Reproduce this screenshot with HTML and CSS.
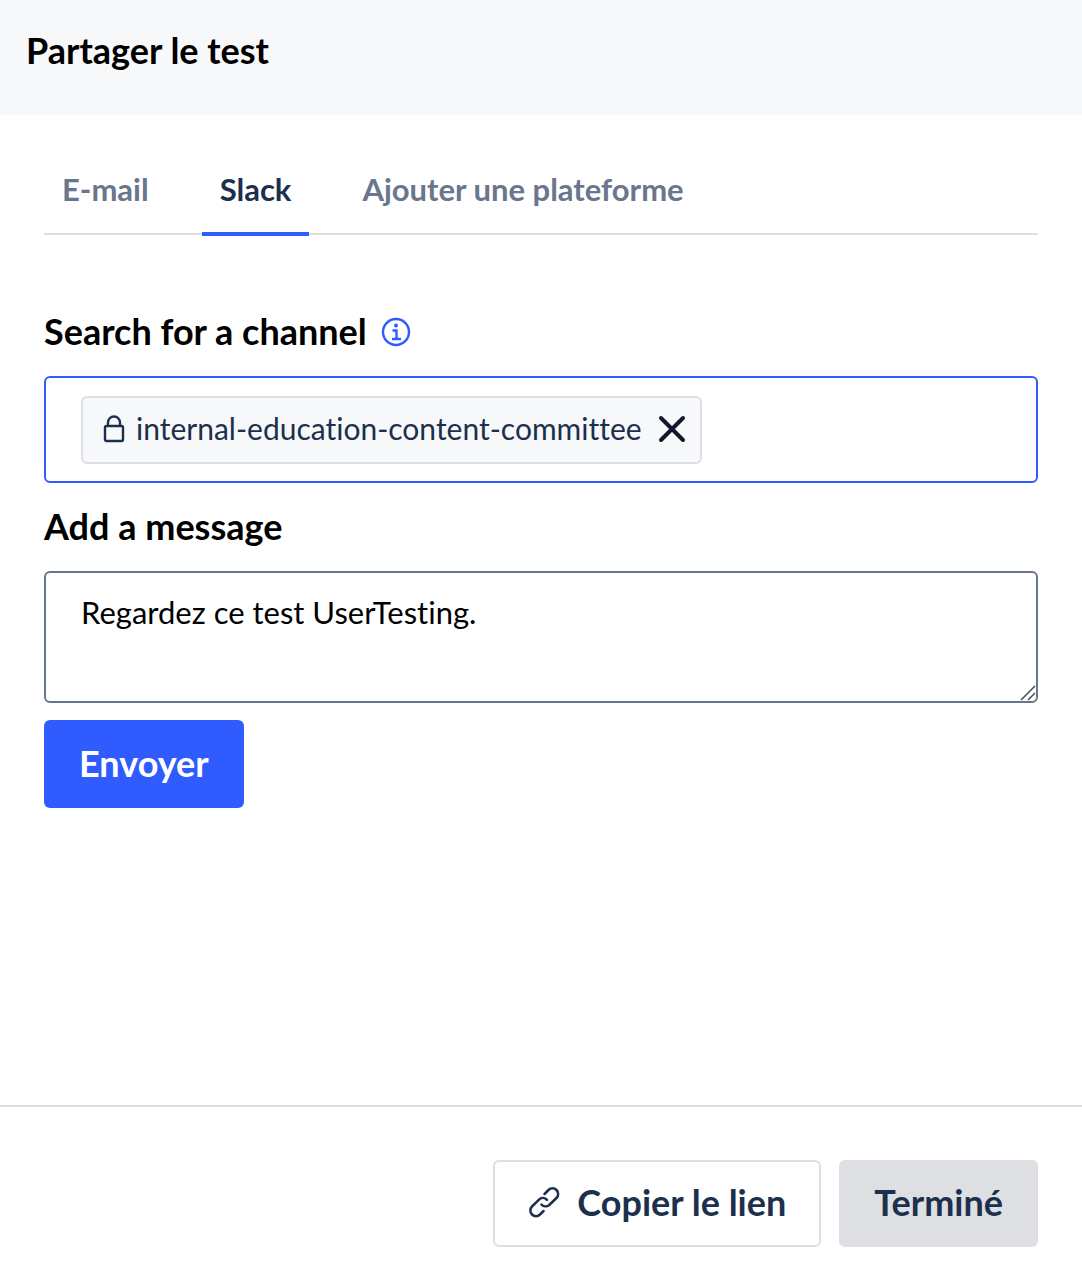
FILE: index.html
```html
<!DOCTYPE html>
<html lang="fr">
<head>
    <meta charset="UTF-8">
    <meta name="viewport" content="width=device-width, initial-scale=1.0">
    <title>Partager le test</title>
    <link rel="stylesheet" href="styles.css">
</head>
<body>

<header class="modal-header">
    <h1 class="modal-title">Partager le test</h1>
</header>

<main class="modal-body">
    <div class="tabs" role="tablist">
        <button type="button" class="tab" role="tab" aria-selected="false">E-mail</button>
        <button type="button" class="tab active" role="tab" aria-selected="true">Slack</button>
        <button type="button" class="tab" role="tab" aria-selected="false">Ajouter une plateforme</button>
    </div>

    <form class="share-form">
        <!-- Channel search -->
        <div class="label-row">
            <label class="field-label" for="channel">Search for a channel</label>
            <svg class="info-icon" viewBox="0 0 30 30" aria-hidden="true">
                <circle cx="15" cy="16" r="13" fill="none" stroke="currentColor" stroke-width="2.4"/>
                <circle cx="15" cy="9.5" r="2" fill="currentColor"/>
                <path d="M11.5 14.5h4v8.500M11 23h9" fill="none" stroke="currentColor" stroke-width="2.4"/>
            </svg>
        </div>
        <div class="channel-box">
            <div class="chip">
                <svg class="lock-icon" viewBox="0 0 22 28" aria-hidden="true">
                    <rect x="2" y="11" width="18" height="15" rx="1.500"/>
                    <path d="M5 11V7.500a6 6 0 0 1 12 0V11"/>
                </svg>
                <span class="chip-name">internal-education-content-committee</span>
                <button type="button" class="chip-remove" aria-label="Retirer">
                    <svg viewBox="0 0 28 28" aria-hidden="true">
                        <path d="M3 3l22 22M25 3L3 25"/>
                    </svg>
                </button>
            </div>
            <input type="text" id="channel" class="channel-input">
        </div>

        <!-- Message -->
        <label class="field-label" for="message">Add a message</label>
        <div class="message-wrap">
            <textarea id="message" class="message" rows="2">Regardez ce test UserTesting.</textarea>
            <svg class="grip" viewBox="0 0 16 16" aria-hidden="true">
                <path d="M1 15L15 1M8 15L15 8"/>
            </svg>
        </div>

        <button type="button" class="btn btn-primary">Envoyer</button>
    </form>
</main>

<footer class="modal-footer">
    <button type="button" class="btn btn-outline">
        <svg class="link-icon" viewBox="0 0 32 32" aria-hidden="true">
            <path d="M16.500 8L20.500 4a5.600 5.600 0 0 1 8 8L21 19.200a5.600 5.600 0 0 1-7.500-.6"/>
            <path d="M15.500 25L12 28.500a5.600 5.600 0 0 1-8-8L11.500 13.200a5.600 5.600 0 0 1 7.500 .6"/>
        </svg>
        Copier le lien
    </button>
    <button type="button" class="btn btn-grey">Terminé</button>
</footer>

</body>
</html>
```
FILE: styles.css
```css
/* General */
* {
    box-sizing: border-box;
}

body {
    margin: 0;
    min-height: 100vh;
    display: flex;
    flex-direction: column;
    background: #fff;
    color: #000;
    font-family: Lato, "Open Sans", sans-serif;
    font-variant-ligatures: none;
}

button,
input,
textarea {
    font-family: inherit;
    font-variant-ligatures: inherit;
}

/* Header */
.modal-header {
    padding: 30px 26px 45px;
    background: #f7f8fa;
}

.modal-title {
    margin: 0;
    font-size: 36px;
    line-height: 40px;
    font-weight: 700;
}

.modal-body {
    flex: 1;
    padding: 45px 44px;
}

/* Tabs */
.tabs {
    display: flex;
    gap: 35px;
    height: 75px;
    border-bottom: 2px solid #dedfe3;
}

.tab {
    height: 76px;
    padding: 0 18px 14px;
    border: 0;
    border-bottom: 4px solid transparent;
    background: none;
    color: #69768c;
    font-size: 31px;
    line-height: 40px;
    font-weight: 700;
    cursor: pointer;
}

.tab.active {
    border-bottom-color: #2f5bff;
    color: #1c304d;
}

/* Form */
.share-form {
    padding-top: 76px;
}

.label-row {
    display: flex;
    align-items: center;
    gap: 14px;
}

.field-label {
    display: block;
    font-size: 36px;
    line-height: 40px;
    font-weight: 700;
}

.info-icon {
    width: 30px;
    height: 30px;
    overflow: visible;
    color: #2f5bff;
}

.channel-box {
    display: flex;
    align-items: center;
    margin: 25px 0 23px;
    padding: 18px 35px 17px;
    border: 2px solid #2f5bff;
    border-radius: 6px;
}

.chip {
    display: flex;
    align-items: center;
    height: 68px;
    padding: 0 14px 0 20px;
    border: 2px solid #dedfe3;
    border-radius: 6px;
    background: #f7f8fa;
    color: #1c304d;
}

.chip svg {
    fill: none;
    stroke: currentColor;
    stroke-width: 2.4;
}

.lock-icon {
    width: 22px;
    height: 28px;
    margin: 0 11px 3px 0;
}

.chip-name {
    padding-bottom: 4px;
    font-size: 30px;
    line-height: 40px;
}

.chip-remove {
    display: flex;
    margin-left: 16px;
    padding: 0 0 2px;
    border: 0;
    background: none;
    color: #0f1b29;
    cursor: pointer;
}

.chip .chip-remove svg {
    width: 28px;
    height: 28px;
    stroke-width: 4;
    stroke-linecap: round;
}

.channel-input {
    flex: 1;
    min-width: 0;
    border: 0;
    outline: 0;
    background: none;
    font-size: 30px;
}

.message-wrap {
    position: relative;
    margin: 25px 0 17px;
}

.message {
    display: block;
    width: 100%;
    height: 132px;
    padding: 19px 35px;
    border: 2px solid #69768c;
    border-radius: 6px;
    color: #000;
    font-size: 31px;
    line-height: 40px;
    resize: none;
}

/* Resize handle in the corner of the message box */
.grip {
    position: absolute;
    right: 2px;
    bottom: 2px;
    width: 16px;
    height: 16px;
    fill: none;
    stroke: #4a4a4a;
    stroke-width: 1.5;
    pointer-events: none;
}

/* Buttons */
.btn {
    display: inline-flex;
    align-items: center;
    justify-content: center;
    height: 87px;
    padding: 0 35px 3px;
    border: 0;
    border-radius: 6px;
    font-size: 36px;
    line-height: 40px;
    font-weight: 700;
    cursor: pointer;
}

.btn-primary {
    height: 88px;
    background: #2f5bff;
    color: #fff;
}

.btn-outline {
    gap: 17px;
    padding: 0 33px 3px;
    border: 2px solid #dedfe3;
    background: #fff;
    color: #1c304d;
}

.btn-grey {
    background: #dedfe3;
    color: #1c304d;
}

.link-icon {
    width: 32px;
    height: 32px;
    fill: none;
    stroke: currentColor;
    stroke-width: 2.5;
    stroke-linecap: round;
}

/* Footer */
.modal-footer {
    display: flex;
    justify-content: flex-end;
    gap: 18px;
    padding: 53px 44px 31px;
    border-top: 2px solid #dedfe3;
}
```
